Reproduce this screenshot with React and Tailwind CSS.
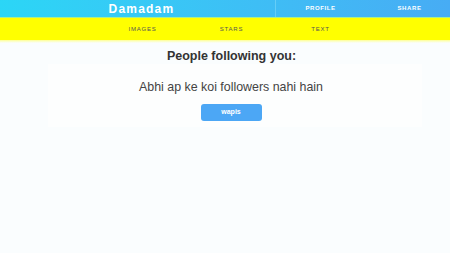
export default function App() {
  return (
    <div className="min-h-[253px] bg-[#fafdfe]" style={{ fontFamily: 'Arial, "Liberation Sans", sans-serif' }}>
      {/* top bar */}
      <div className="h-[17px] flex items-center bg-gradient-to-r from-[#2bd6f6] to-[#47acf4]">
        <div className="w-[276px] h-full flex items-center justify-center border-r border-[#7fd8f8]/60">
          <span className="text-white font-bold text-[12px] tracking-[1.2px] pl-[8px]">Damadam</span>
        </div>
        <div className="w-[89px] text-center text-white font-bold text-[6px] tracking-[0.6px]">PROFILE</div>
        <div className="flex-1 text-center text-white font-bold text-[6px] tracking-[0.6px] pl-[4px]">SHARE</div>
      </div>
      <div className="h-[1px] bg-[#a8ef8a]" />
      {/* nav */}
      <div className="h-[22px] bg-[#ffff00] flex items-center">
        <div className="w-[98px]" />
        <div className="w-[89px] text-center text-[6px] tracking-[0.8px] text-[#555]">IMAGES</div>
        <div className="w-[89px] text-center text-[6px] tracking-[0.8px] text-[#555]">STARS</div>
        <div className="w-[89px] text-center text-[6px] tracking-[0.8px] text-[#555]">TEXT</div>
      </div>
      <div className="h-[3px] bg-gradient-to-b from-[#ffff90] to-[#fafdfe]" />
      {/* content */}
      <div className="pt-[5px]">
        <h1 className="pl-[13px] text-center text-[12.5px] leading-[16px] font-bold text-[#333]">People following you:</h1>
        <div className="ml-[48px] w-[374px] bg-[#fdfefe] pt-[15px] pb-[6px]">
          <div className="-ml-[8px] flex flex-col items-center">
            <p className="text-[12.4px] leading-[16px] text-[#444]">Abhi ap ke koi followers nahi hain</p>
            <button className="mt-[9px] w-[61px] h-[17px] rounded-[3px] bg-[#4ca7f5] text-white font-bold text-[7px]">wapis</button>
          </div>
        </div>
      </div>
    </div>
  )
}
